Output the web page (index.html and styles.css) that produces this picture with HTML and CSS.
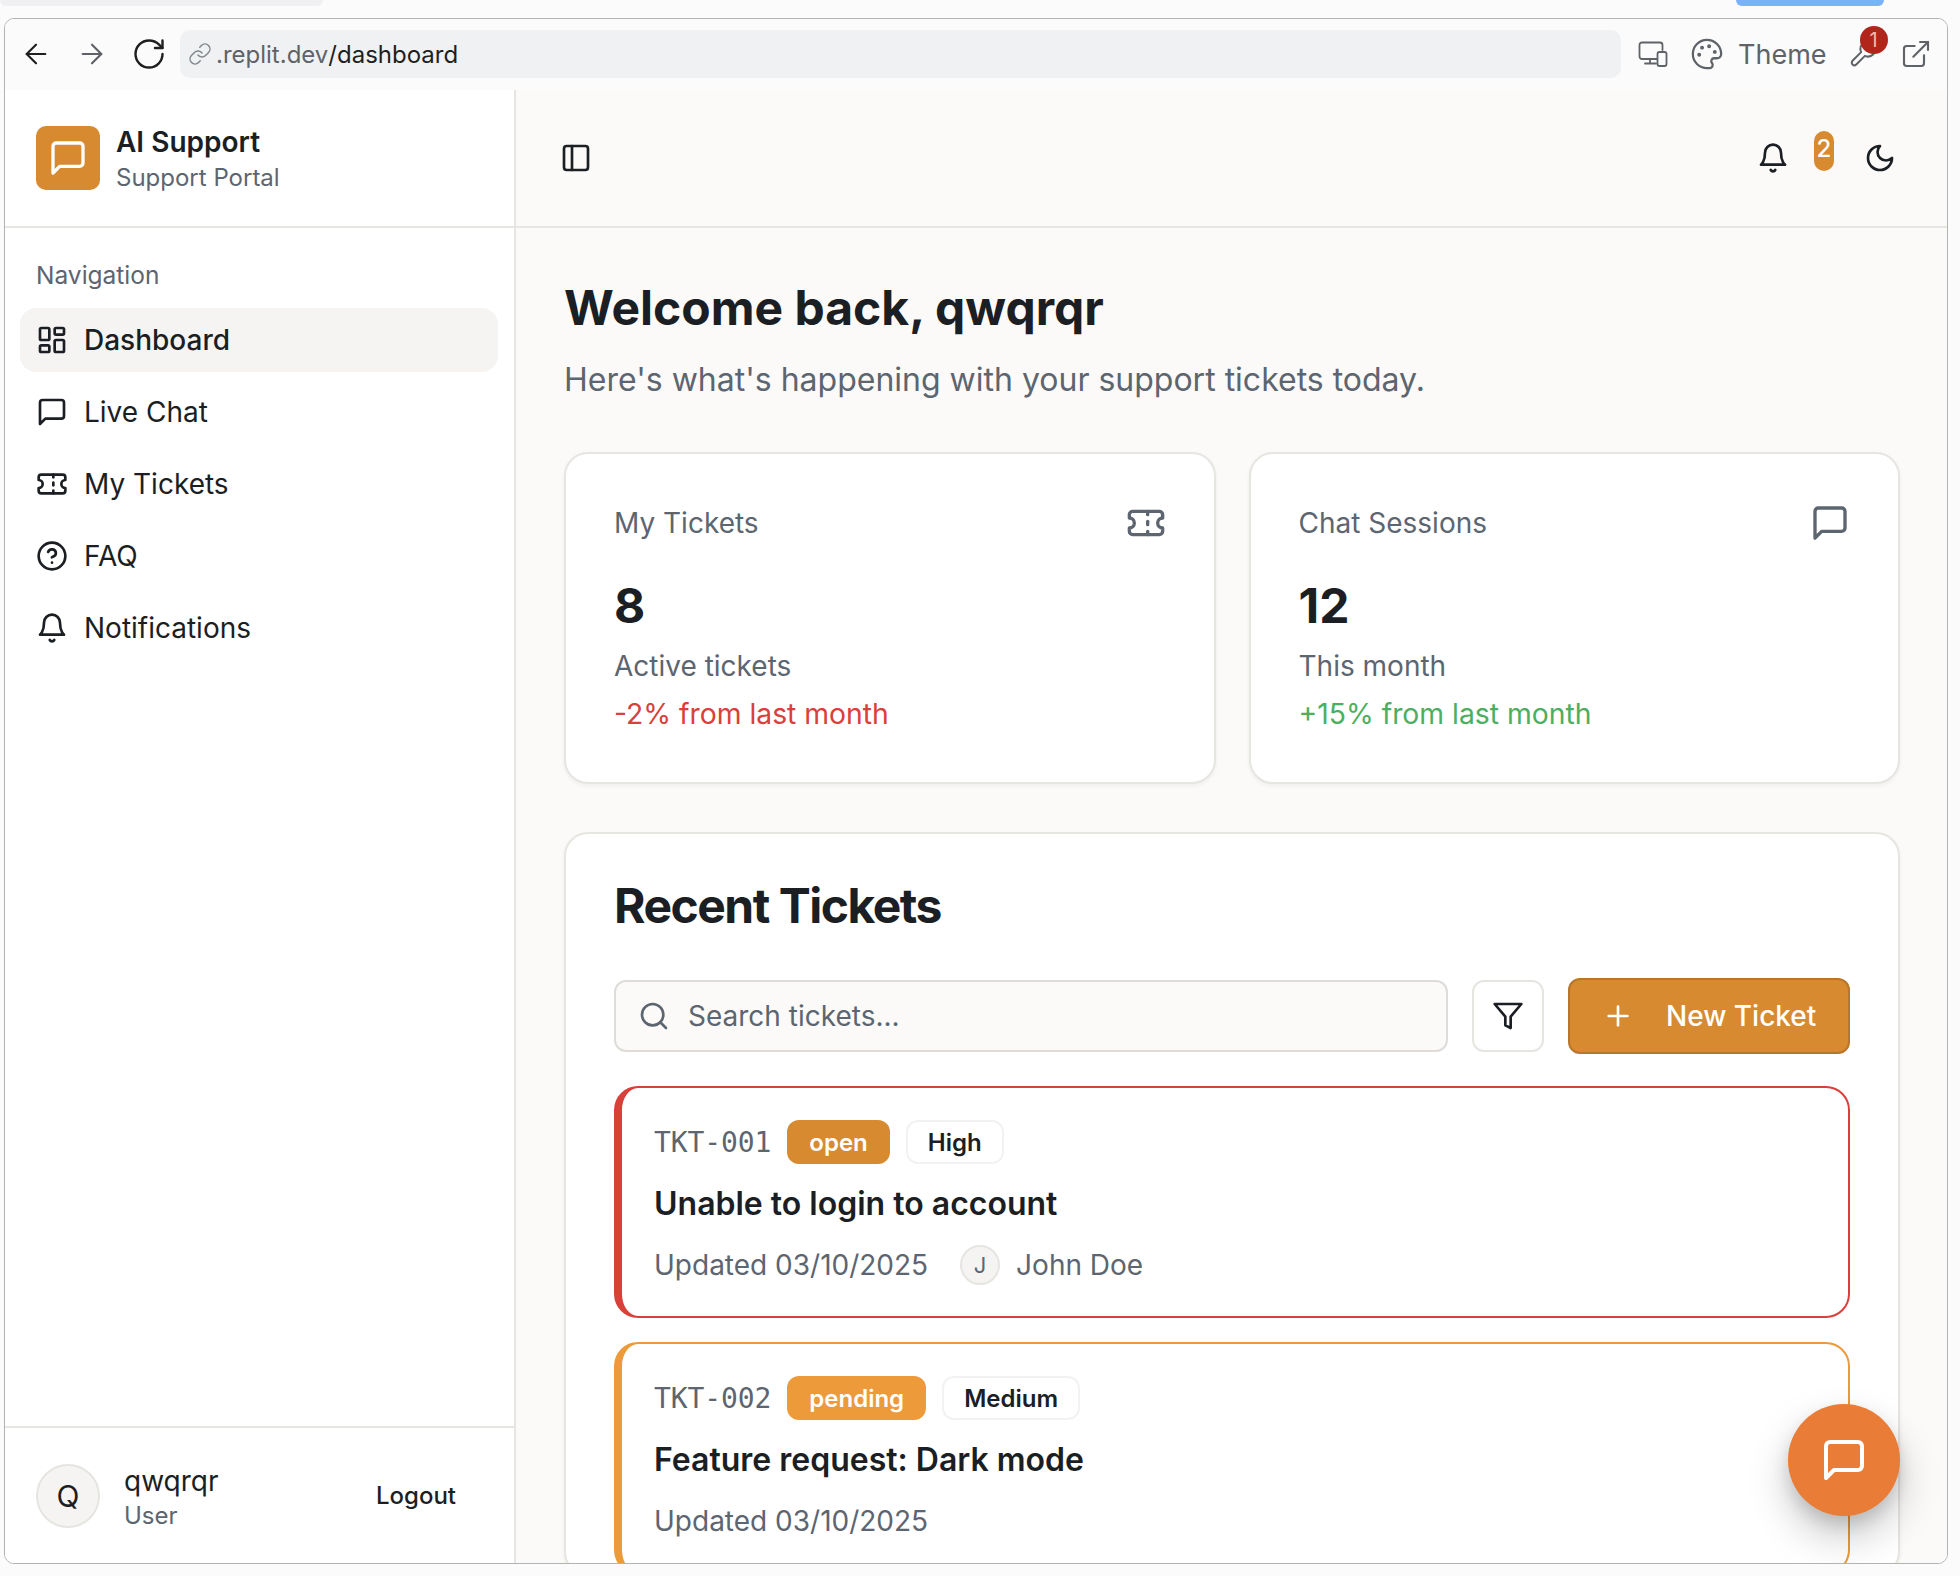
FILE: index.html
```html
<!DOCTYPE html>
<html lang="en">
<head>
    <meta charset="UTF-8">
    <title>AI Support</title>
    <link rel="stylesheet" href="styles.css">
</head>
<body>
    <svg class="sprite" width="0" height="0">
        <symbol id="i-chat" viewBox="0 0 24 24"><path d="M21 15a2 2 0 0 1-2 2H7l-4 4V5a2 2 0 0 1 2-2h14a2 2 0 0 1 2 2z"/></symbol>
        <symbol id="i-grid" viewBox="0 0 24 24"><rect x="3" y="3" width="7" height="9" rx="1"/><rect x="14" y="3" width="7" height="5" rx="1"/><rect x="14" y="12" width="7" height="9" rx="1"/><rect x="3" y="16" width="7" height="5" rx="1"/></symbol>
        <symbol id="i-ticket" viewBox="0 0 24 24"><path d="M2 9a3 3 0 0 1 0 6v2a2 2 0 0 0 2 2h16a2 2 0 0 0 2-2v-2a3 3 0 0 1 0-6V7a2 2 0 0 0-2-2H4a2 2 0 0 0-2 2Z"/><path d="M13 5v2"/><path d="M13 17v2"/><path d="M13 11v2"/></symbol>
        <symbol id="i-help" viewBox="0 0 24 24"><circle cx="12" cy="12" r="10"/><path d="M9.09 9a3 3 0 0 1 5.83 1c0 2-3 3-3 3"/><path d="M12 17h.01"/></symbol>
        <symbol id="i-bell" viewBox="0 0 24 24"><path d="M6 8a6 6 0 0 1 12 0c0 7 3 9 3 9H3s3-2 3-9"/><path d="M10.3 21a1.94 1.94 0 0 0 3.4 0"/></symbol>
    </svg>

    <div class="tab-strip">
        <div class="tab-stub"></div>
        <div class="tab-blue"></div>
    </div>

    <div class="window">
        <div class="toolbar">
            <svg class="tb-icon nav-back" viewBox="0 0 24 24"><path d="m12 19-7-7 7-7"/><path d="M19 12H5"/></svg>
            <svg class="tb-icon nav-forward" viewBox="0 0 24 24"><path d="M5 12h14"/><path d="m12 5 7 7-7 7"/></svg>
            <svg class="tb-icon nav-reload" viewBox="0 0 24 24"><path d="M21 12a9 9 0 1 1-9-9c2.52 0 4.93 1 6.74 2.74L21 8"/><path d="M21 3v5h-5"/></svg>
            <div class="address">
                <svg class="link-icon" viewBox="0 0 24 24"><path d="M10 13a5 5 0 0 0 7.54.54l3-3a5 5 0 0 0-7.07-7.07l-1.72 1.71"/><path d="M14 11a5 5 0 0 0-7.54-.54l-3 3a5 5 0 0 0 7.07 7.07l1.71-1.71"/></svg>
                <span class="host">.replit.dev</span><span class="path">/dashboard</span>
            </div>
            <svg class="tool-icon device-icon" viewBox="0 0 30 26"><path d="M19 18H4a2.5 2.5 0 0 1-2.500-2.500V4A2.500 2.500 0 0 1 4 1.500h18A2.500 2.500 0 0 1 24.500 4v5"/><path d="M12 18v4"/><path d="M7 22.500h11"/><rect x="19.500" y="11" width="9" height="14" rx="2"/></svg>
            <svg class="tool-icon palette-icon" viewBox="0 0 24 24"><path d="M12 22a10 10 0 1 1 10-10c0 2-1.500 3-3 3h-2a2 2 0 0 0-1.500 3.300c.4.500.5 1 .5 1.400 0 1.300-1.100 2.300-2 2.300z"/><circle class="dot" cx="13.500" cy="6.500" r=".6"/><circle class="dot" cx="17.500" cy="10.500" r=".6"/><circle class="dot" cx="8.500" cy="7.500" r=".6"/><circle class="dot" cx="6.500" cy="12.500" r=".6"/></svg>
            <span class="theme-label">Theme</span>
            <div class="tool-wrap">
                <svg class="tool-icon wrench-icon" viewBox="0 0 24 24"><path d="M14.700 6.300a1 1 0 0 0 0 1.400l1.600 1.600a1 1 0 0 0 1.400 0l3.770-3.770a6 6 0 0 1-7.940 7.940l-6.910 6.910a2.120 2.120 0 0 1-3-3l6.910-6.910a6 6 0 0 1 7.940-7.940l-3.760 3.760z"/></svg>
                <span class="tool-badge">1</span>
            </div>
            <svg class="tool-icon external-icon" viewBox="0 0 24 24"><path d="M15 3h6v6"/><path d="M10 14 21 3"/><path d="M18 13v6a2 2 0 0 1-2 2H5a2 2 0 0 1-2-2V8a2 2 0 0 1 2-2h6"/></svg>
        </div>

        <div class="app">
            <aside class="sidebar">
                <div class="brand">
                    <div class="logo"><svg class="icon logo-icon" viewBox="0 0 24 24"><use href="#i-chat"/></svg></div>
                    <div class="brand-text">
                        <div class="brand-name">AI Support</div>
                        <div class="brand-sub">Support Portal</div>
                    </div>
                </div>

                <nav class="nav">
                    <div class="nav-label">Navigation</div>
                    <a class="nav-item active"><svg class="icon" viewBox="0 0 24 24"><use href="#i-grid"/></svg>Dashboard</a>
                    <a class="nav-item"><svg class="icon" viewBox="0 0 24 24"><use href="#i-chat"/></svg>Live Chat</a>
                    <a class="nav-item"><svg class="icon" viewBox="0 0 24 24"><use href="#i-ticket"/></svg>My Tickets</a>
                    <a class="nav-item"><svg class="icon" viewBox="0 0 24 24"><use href="#i-help"/></svg>FAQ</a>
                    <a class="nav-item"><svg class="icon" viewBox="0 0 24 24"><use href="#i-bell"/></svg>Notifications</a>
                </nav>

                <div class="user-box">
                    <div class="user-avatar">Q</div>
                    <div class="user-info">
                        <div class="user-name">qwqrqr</div>
                        <div class="user-role">User</div>
                    </div>
                    <button class="logout">Logout</button>
                </div>
            </aside>

            <div class="main">
                <header class="topbar">
                    <svg class="icon panel-icon" viewBox="0 0 24 24"><rect x="3" y="3" width="18" height="18" rx="2"/><path d="M9 3v18"/></svg>
                    <div class="topbar-right">
                        <svg class="icon bell-icon" viewBox="0 0 24 24"><use href="#i-bell"/></svg>
                        <span class="count-badge">2</span>
                        <svg class="icon moon-icon" viewBox="0 0 24 24"><path d="M12 3a6 6 0 0 0 9 9 9 9 0 1 1-9-9Z"/></svg>
                    </div>
                </header>

                <div class="content">
                    <h1>Welcome back, qwqrqr</h1>
                    <p class="lead">Here's what's happening with your support tickets today.</p>

                    <div class="stats">
                        <div class="card stat">
                            <div class="stat-head">
                                <span>My Tickets</span>
                                <svg class="icon stat-icon" viewBox="0 0 24 24"><use href="#i-ticket"/></svg>
                            </div>
                            <div class="stat-value">8</div>
                            <div class="stat-note">Active tickets</div>
                            <div class="stat-trend down">-2% from last month</div>
                        </div>
                        <div class="card stat">
                            <div class="stat-head">
                                <span>Chat Sessions</span>
                                <svg class="icon stat-icon" viewBox="0 0 24 24"><use href="#i-chat"/></svg>
                            </div>
                            <div class="stat-value">12</div>
                            <div class="stat-note">This month</div>
                            <div class="stat-trend up">+15% from last month</div>
                        </div>
                    </div>

                    <div class="card recent">
                        <h2>Recent Tickets</h2>
                        <div class="filters">
                            <div class="search">
                                <svg class="icon search-icon" viewBox="0 0 24 24"><circle cx="11" cy="11" r="8"/><path d="m21 21-4.300-4.300"/></svg>
                                <span>Search tickets...</span>
                            </div>
                            <button class="filter-btn"><svg class="icon" viewBox="0 0 24 24"><polygon points="22 3 2 3 10 12.460 10 19 14 21 14 12.460 22 3"/></svg></button>
                            <button class="new-btn"><svg class="icon" viewBox="0 0 24 24"><path d="M5 12h14"/><path d="M12 5v14"/></svg>New Ticket</button>
                        </div>

                        <div class="ticket ticket-high">
                            <div class="ticket-top">
                                <span class="ticket-id">TKT-001</span>
                                <span class="badge badge-open">open</span>
                                <span class="badge badge-outline">High</span>
                            </div>
                            <div class="ticket-title">Unable to login to account</div>
                            <div class="ticket-meta">
                                <span>Updated 03/10/2025</span>
                                <span class="mini-avatar">J</span>
                                <span>John Doe</span>
                            </div>
                        </div>

                        <div class="ticket ticket-medium">
                            <div class="ticket-top">
                                <span class="ticket-id">TKT-002</span>
                                <span class="badge badge-pending">pending</span>
                                <span class="badge badge-outline">Medium</span>
                            </div>
                            <div class="ticket-title">Feature request: Dark mode</div>
                            <div class="ticket-meta">
                                <span>Updated 03/10/2025</span>
                            </div>
                        </div>
                    </div>
                </div>

                <button class="fab"><svg class="icon" viewBox="0 0 24 24"><use href="#i-chat"/></svg></button>
            </div>
        </div>
    </div>
</body>
</html>
```

FILE: styles.css
```css
/* Reset */
* {
    margin: 0;
    padding: 0;
    box-sizing: border-box;
}

:root {
    --ink: #1b1e23;
    --muted: #5c6570;
    --line: #e6e5e2;
    --page: #fbfaf8;
    --amber: #d78a30;
    --orange: #ec9a3a;
    --red: #d9403a;
}

html,
body {
    height: 100%;
    overflow: hidden;
}

body {
    display: flex;
    flex-direction: column;
    padding: 0 12px 12px 4px;
    background-color: #fbfbfb;
    color: var(--ink);
    font-family: Inter, "Liberation Sans", sans-serif;
}

.sprite {
    position: absolute;
}

.icon,
.tb-icon,
.tool-icon,
.link-icon {
    flex: none;
    fill: none;
    stroke: currentColor;
    stroke-width: 2;
    stroke-linecap: round;
    stroke-linejoin: round;
}

/* Browser frame */
.tab-strip {
    display: flex;
    justify-content: space-between;
    flex: none;
    height: 18px;
    margin-left: -4px;
    margin-right: 64px;
}

.tab-stub {
    width: 323px;
    height: 6px;
    border-radius: 0 0 8px 8px;
    background-color: #f0f0f2;
}

.tab-blue {
    width: 148px;
    height: 6px;
    border-radius: 0 0 8px 8px;
    background-color: #7ab2f9;
}

.window {
    display: flex;
    flex: 1;
    flex-direction: column;
    min-height: 0;
    border: 1px solid #b3b3b3;
    border-radius: 10px;
    background-color: #fff;
    overflow: hidden;
}

.toolbar {
    display: flex;
    flex: none;
    align-items: center;
    height: 71px;
    padding-bottom: 1px;
    background-color: #fbfbfb;
}

.tb-icon {
    width: 32px;
    height: 32px;
    stroke-width: 1.600;
}

.nav-back {
    margin-left: 15px;
    color: #1f1f1f;
}

.nav-forward {
    margin-left: 24px;
    color: #5f6368;
}

.nav-reload {
    width: 36px;
    height: 36px;
    margin-left: 23px;
    color: #1f1f1f;
}

.address {
    display: flex;
    flex: none;
    align-items: center;
    width: 1441px;
    height: 48px;
    margin-left: 13px;
    padding-left: 8px;
    border-radius: 10px;
    background-color: #f0f1f3;
    font-size: 24px;
}

.link-icon {
    width: 24px;
    height: 24px;
    margin-right: 4px;
    color: #80868b;
    stroke-width: 1.500;
}

.host {
    color: #5f6368;
}

.path {
    color: #1f1f1f;
}

.tool-icon {
    color: #5f6368;
    stroke-width: 1.600;
}

.device-icon {
    width: 30px;
    height: 26px;
    margin-left: 17px;
    stroke-width: 1.800;
}

.palette-icon {
    width: 34px;
    height: 34px;
    margin-left: 22px;
}

.dot {
    fill: #5f6368;
}

.theme-label {
    margin-left: 14px;
    color: #5f6368;
    font-size: 27px;
}

.tool-wrap {
    position: relative;
    width: 30px;
    height: 30px;
    margin-left: 21px;
}

.wrench-icon {
    width: 30px;
    height: 30px;
}

.tool-badge {
    position: absolute;
    top: -13px;
    left: 12px;
    width: 28px;
    height: 28px;
    border-radius: 50%;
    background-color: #b1261b;
    color: #f6b8b0;
    font-size: 20px;
    line-height: 28px;
    text-align: center;
}

.external-icon {
    width: 32px;
    height: 32px;
    margin-left: 22px;
}

/* App layout */
.app {
    display: flex;
    flex: 1;
    min-height: 0;
}

.sidebar {
    display: flex;
    flex: none;
    flex-direction: column;
    width: 511px;
    border-right: 2px solid var(--line);
    background-color: #fff;
}

.brand {
    display: flex;
    flex: none;
    align-items: center;
    gap: 16px;
    height: 138px;
    padding-left: 31px;
    border-bottom: 2px solid var(--line);
}

.logo {
    display: flex;
    flex: none;
    align-items: center;
    justify-content: center;
    width: 64px;
    height: 64px;
    border-radius: 10px;
    background-color: var(--amber);
    color: #fff;
}

.logo-icon {
    width: 40px;
    height: 40px;
}

.brand-text {
    margin-top: 4px;
}

.brand-name {
    font-size: 28px;
    font-weight: 600;
    line-height: 36px;
}

.brand-sub {
    color: var(--muted);
    font-size: 24px;
    line-height: 36px;
}

.nav {
    flex: 1;
    padding: 32px 16px 0 15px;
}

.nav-label {
    height: 40px;
    margin-bottom: 8px;
    padding-left: 16px;
    color: var(--muted);
    font-size: 24.500px;
    line-height: 31px;
}

.nav-item {
    display: flex;
    align-items: center;
    gap: 16px;
    height: 64px;
    margin-bottom: 8px;
    padding-left: 16px;
    border-radius: 16px;
    font-size: 28px;
}

.nav-item .icon {
    width: 32px;
    height: 32px;
}

.nav-item.active {
    background-color: #f5f4f2;
    font-weight: 500;
}

.user-box {
    display: flex;
    flex: none;
    align-items: center;
    height: 137px;
    padding: 0 32px 0 31px;
    border-top: 2px solid var(--line);
}

.user-avatar {
    display: flex;
    flex: none;
    align-items: center;
    justify-content: center;
    width: 64px;
    height: 64px;
    border: 2px solid var(--line);
    border-radius: 50%;
    background-color: #f5f4f2;
    font-size: 30px;
}

.user-info {
    flex: 1;
    margin-top: 4px;
    margin-left: 24px;
}

.user-name {
    font-size: 28px;
    line-height: 36px;
}

.user-role {
    color: var(--muted);
    font-size: 24px;
    line-height: 34px;
}

.logout {
    margin-right: 26px;
    border: none;
    background: none;
    color: var(--ink);
    font-family: inherit;
    font-size: 24px;
    font-weight: 500;
}

/* Main */
.main {
    position: relative;
    flex: 1;
    min-width: 0;
    background-color: var(--page);
    overflow: hidden;
}

.topbar {
    display: flex;
    align-items: center;
    justify-content: space-between;
    height: 138px;
    padding: 0 51px 0 44px;
    border-bottom: 2px solid var(--line);
}

.panel-icon {
    width: 32px;
    height: 32px;
}

.topbar-right {
    display: flex;
    align-items: center;
}

.bell-icon,
.moon-icon {
    width: 32px;
    height: 32px;
}

.count-badge {
    width: 20px;
    height: 40px;
    margin: -14px 30px 0 25px;
    border-radius: 10px;
    background-color: var(--amber);
    color: #fff;
    font-size: 24px;
    font-weight: 500;
    line-height: 36px;
    text-align: center;
}

.content {
    padding: 50px 47px 0 48px;
}

h1 {
    font-size: 48px;
    font-weight: 700;
    line-height: 60px;
}

.lead {
    margin-top: 20px;
    color: var(--muted);
    font-size: 32px;
    line-height: 44px;
}

.card {
    border: 2px solid var(--line);
    border-radius: 24px;
    background-color: #fff;
    box-shadow: 0 2px 4px rgba(0, 0, 0, 0.05);
}

.stats {
    display: grid;
    grid-template-columns: 1fr 1fr;
    gap: 33px;
    margin-top: 50px;
}

.stat {
    height: 332px;
    padding: 49px 48px 0;
}

.stat-head {
    display: flex;
    align-items: center;
    justify-content: space-between;
    height: 40px;
    color: var(--muted);
    font-size: 28px;
}

.stat-icon {
    width: 40px;
    height: 40px;
}

.stat-value {
    margin-top: 35px;
    font-size: 48px;
    font-weight: 700;
    line-height: 56px;
}

.stat-note {
    margin-top: 8px;
    color: var(--muted);
    font-size: 28px;
    line-height: 48px;
}

.stat-trend {
    font-size: 28.300px;
    line-height: 48px;
}

.down {
    color: var(--red);
}

.up {
    color: #4caf5f;
}

.recent {
    margin-top: 48px;
    padding: 48px 48px 0;
}

h2 {
    font-size: 48px;
    font-weight: 700;
    line-height: 48px;
    letter-spacing: -1.500px;
}

.filters {
    display: flex;
    align-items: center;
    margin-top: 48px;
}

.search {
    display: flex;
    flex: 1;
    align-items: center;
    gap: 18px;
    height: 72px;
    padding-left: 22px;
    border: 2px solid #dddcd8;
    border-radius: 12px;
    background-color: var(--page);
    color: var(--muted);
    font-size: 28px;
}

.search-icon {
    width: 32px;
    height: 32px;
}

.filter-btn {
    display: flex;
    align-items: center;
    justify-content: center;
    width: 72px;
    height: 72px;
    margin: 0 24px;
    border: 2px solid var(--line);
    border-radius: 12px;
    background-color: #fff;
    color: var(--ink);
}

.filter-btn .icon {
    width: 32px;
    height: 32px;
}

.new-btn {
    display: flex;
    align-items: center;
    gap: 32px;
    width: 282px;
    height: 76px;
    padding-left: 32px;
    border: 2px solid #b9752a;
    border-radius: 12px;
    background-color: var(--amber);
    color: #fff;
    font-family: inherit;
    font-size: 28px;
    font-weight: 500;
}

.new-btn .icon {
    width: 32px;
    height: 32px;
}

.ticket {
    height: 232px;
    margin-top: 32px;
    padding: 32px 32px 0;
    border: 2px solid var(--red);
    border-left-width: 8px;
    border-radius: 24px;
    background-color: #fff;
}

.ticket + .ticket {
    margin-top: 24px;
}

.ticket-medium {
    border-color: var(--orange);
}

.ticket-top {
    display: flex;
    align-items: center;
    height: 44px;
}

.ticket-id {
    color: var(--muted);
    font-family: "DejaVu Sans Mono", "Liberation Mono", monospace;
    font-size: 28px;
    letter-spacing: -0.100px;
}

.badge {
    display: flex;
    align-items: center;
    height: 44px;
    padding: 0 20px;
    border-radius: 12px;
    font-size: 24px;
    font-weight: 600;
}

.badge-open,
.badge-pending {
    margin-left: 16px;
    padding: 0 22px;
    color: #fff;
}

.badge-open {
    background-color: var(--amber);
}

.badge-pending {
    background-color: var(--orange);
}

.badge-outline {
    margin-left: 16px;
    border: 2px solid #f2f2f2;
    background-color: #fff;
}

.ticket-title {
    margin-top: 16px;
    font-size: 32px;
    font-weight: 600;
    line-height: 48px;
}

.ticket-meta {
    display: flex;
    align-items: center;
    height: 44px;
    margin-top: 15px;
    color: var(--muted);
    font-size: 28px;
}

.mini-avatar {
    display: flex;
    align-items: center;
    justify-content: center;
    width: 40px;
    height: 40px;
    margin: 0 16px 0 32px;
    border: 2px solid var(--line);
    border-radius: 50%;
    background-color: #f5f4f2;
    font-size: 22px;
}

/* Tombol chat */
.fab {
    position: absolute;
    right: 47px;
    bottom: 47px;
    display: flex;
    align-items: center;
    justify-content: center;
    width: 112px;
    height: 112px;
    border: none;
    border-radius: 50%;
    background-color: #e97c36;
    box-shadow: 0 20px 40px rgba(0, 0, 0, 0.22), 0 8px 16px rgba(0, 0, 0, 0.12);
    color: #fff;
}

.fab .icon {
    width: 48px;
    height: 48px;
}
```
